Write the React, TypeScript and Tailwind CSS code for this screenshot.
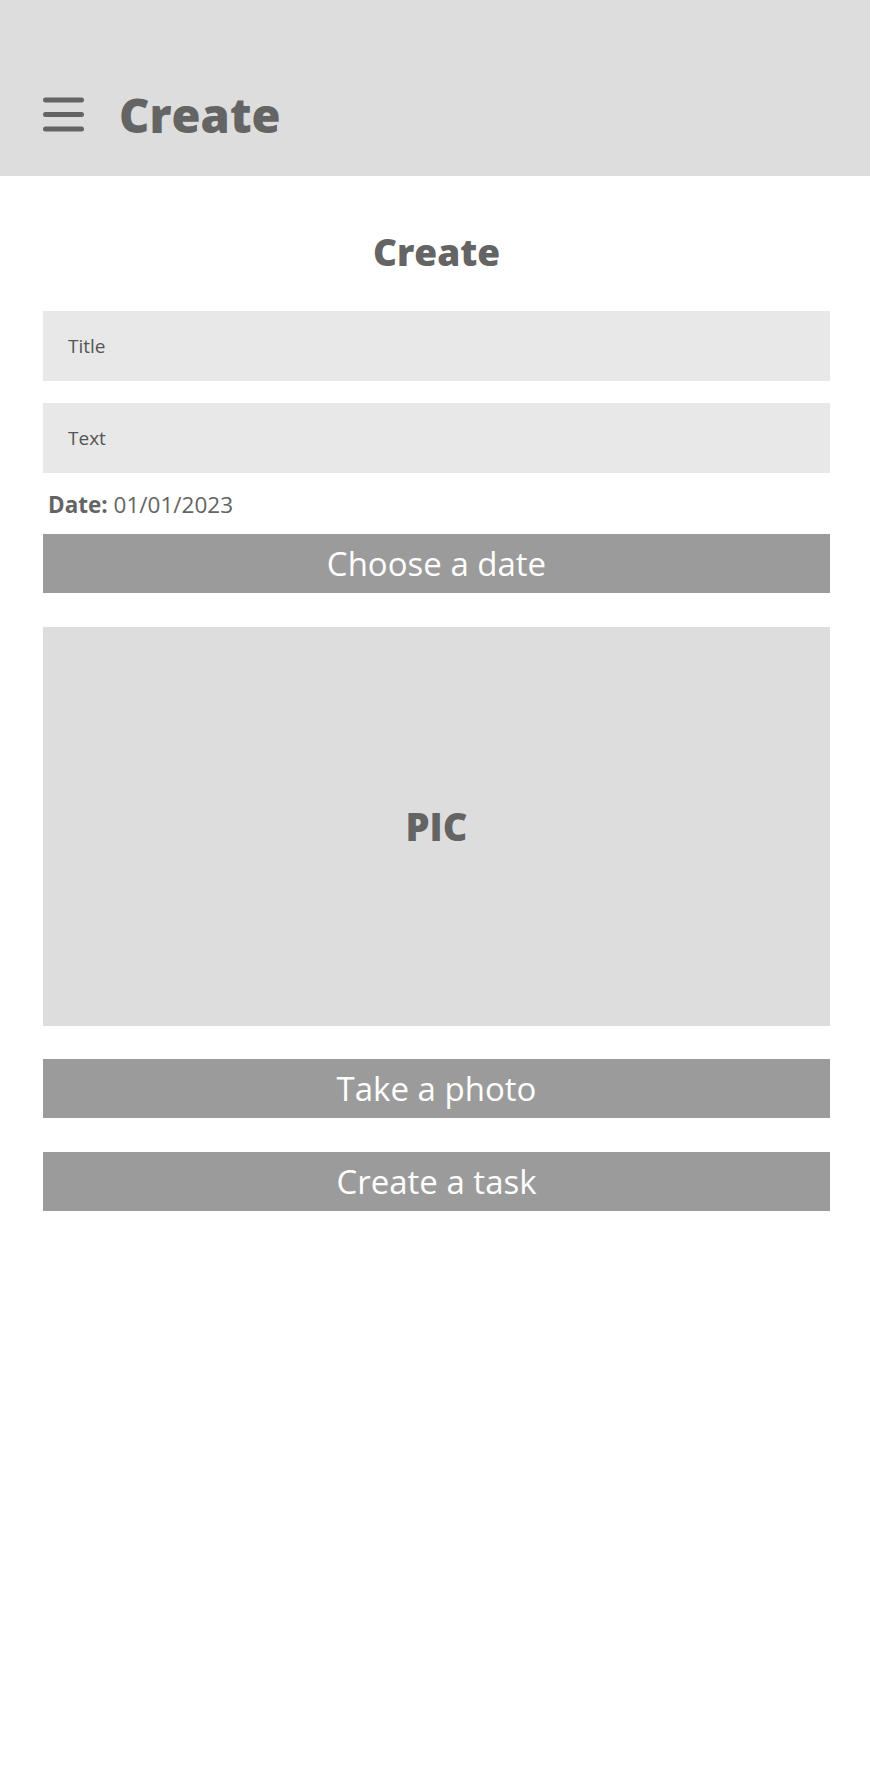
export default function App() {
  return (
    <div className="min-h-[1792px] bg-white font-['Open_Sans',sans-serif] text-[#646464]">
      <header className="flex h-[176px] items-center gap-[35px] bg-[#dddddd] px-[43px] pt-[54px]">
        <button type="button" aria-label="Menu" className="block">
          <svg width="41" height="36" viewBox="0 0 41 36" aria-hidden>
            <g stroke="#646464" strokeWidth="5" strokeLinecap="round">
              <line x1="2.5" y1="3" x2="38.5" y2="3" />
              <line x1="2.5" y1="17.5" x2="38.5" y2="17.5" />
              <line x1="2.5" y1="32" x2="38.5" y2="32" />
            </g>
          </svg>
        </button>
        <h1 className="text-[47px] leading-[1.2] font-extrabold">Create</h1>
      </header>

      <main className="flex flex-col pr-[40px] pl-[43px]">
        <h2 className="mt-[57px] text-center text-[37px] leading-none font-extrabold">
          Create
        </h2>

        <input
          type="text"
          placeholder="Title"
          className="mt-[41px] h-[70px] w-full bg-[#e8e8e8] pl-[25px] text-[19px] text-[#555] placeholder:text-[#555] focus:outline-none"
        />
        <input
          type="text"
          placeholder="Text"
          className="mt-[22px] h-[70px] w-full bg-[#e8e8e8] pl-[25px] text-[19px] text-[#555] placeholder:text-[#555] focus:outline-none"
        />

        <p className="mt-[21px] pl-[5px] text-[22.5px] leading-none">
          <span className="font-bold">Date:</span> 01/01/2023
        </p>

        <button
          type="button"
          className="mt-[17px] h-[59px] w-full bg-[#9b9b9b] pt-[1px] text-[33px] text-white"
        >
          Choose a date
        </button>

        <div className="mt-[34px] flex h-[399px] items-center justify-center bg-[#dddddd]">
          <span className="text-[38px] font-extrabold">PIC</span>
        </div>

        <button
          type="button"
          className="mt-[33px] h-[59px] w-full bg-[#9b9b9b] pt-[1px] text-[33px] text-white"
        >
          Take a photo
        </button>
        <button
          type="button"
          className="mt-[34px] h-[59px] w-full bg-[#9b9b9b] pt-[1px] text-[33px] text-white"
        >
          Create a task
        </button>
      </main>
    </div>
  );
}
